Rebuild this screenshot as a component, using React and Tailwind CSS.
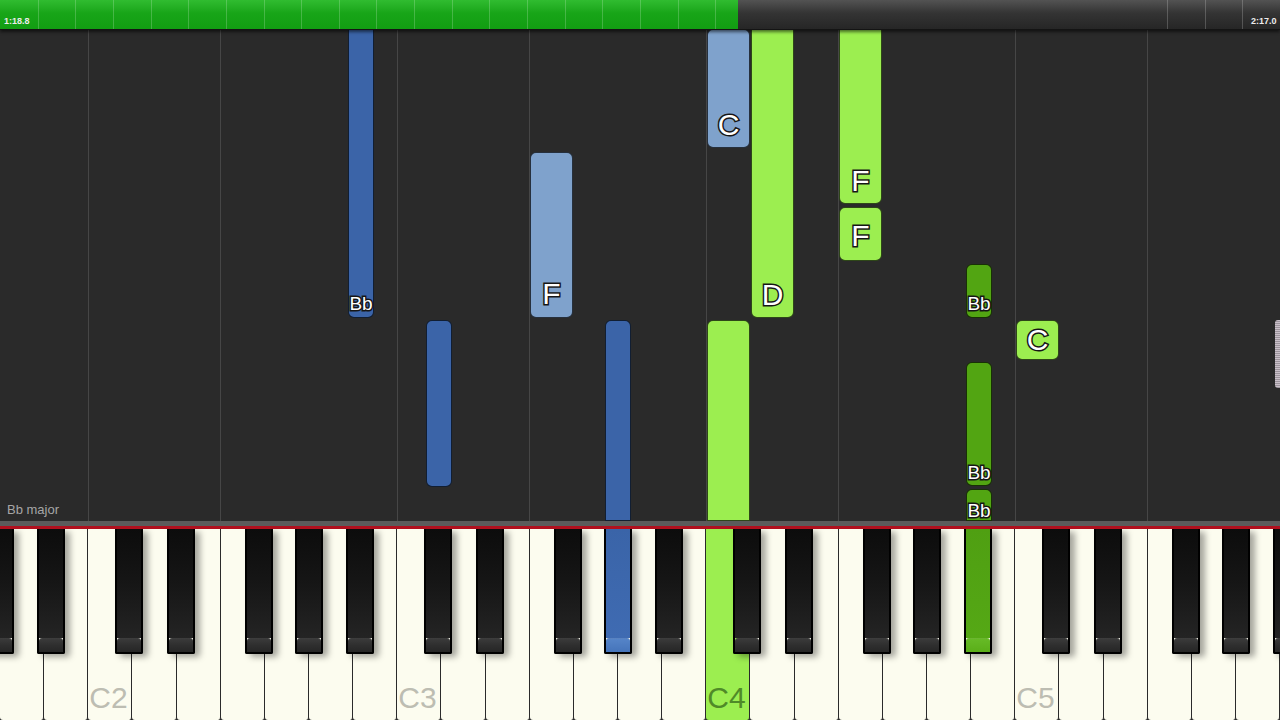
import React from 'react';

// key geometry (px)
const WHITE_W = 1280 / 29;
const BLACK_OFFSETS = [27, 79, 157, 207, 258]; // C#, D#, F#, G#, A# from the C of each octave
const WHITE_NAMES = ['C', 'D', 'E', 'F', 'G', 'A', 'B'];
const SEG_W = 1280 / 34;

// falling notes, positioned inside the roll area (top of roll = y 30)
const notes = [
  { cls: 'left-[348px] top-[-10px] w-[26px] h-[298px] bg-[#3b64a8] pb-[4px]', label: 'Bb' },
  { cls: 'left-[426px] top-[290px] w-[26px] h-[167px] bg-[#3b64a8]' },
  { cls: 'left-[530px] top-[122px] w-[43px] h-[166px] bg-[#7fa2cc] pb-[8px]', label: 'F', big: true },
  { cls: 'left-[605px] top-[290px] w-[26px] h-[201px] bg-[#3b64a8] rounded-b-none' },
  { cls: 'left-[707px] top-[-1px] w-[43px] h-[119px] bg-[#7fa2cc] pb-[7px]', label: 'C', big: true },
  { cls: 'left-[751px] top-[-10px] w-[43px] h-[298px] bg-[#9cee50] pb-[7px]', label: 'D', big: true },
  { cls: 'left-[707px] top-[290px] w-[43px] h-[201px] bg-[#9cee50] rounded-b-none' },
  { cls: 'left-[839px] top-[-10px] w-[43px] h-[184px] bg-[#9cee50] pb-[7px]', label: 'F', big: true },
  { cls: 'left-[839px] top-[177px] w-[43px] h-[54px] bg-[#9cee50] pb-[9px]', label: 'F', big: true },
  { cls: 'left-[966px] top-[234px] w-[26px] h-[54px] bg-[#52a512] pb-[4px]', label: 'Bb' },
  { cls: 'left-[966px] top-[332px] w-[26px] h-[124px] bg-[#52a512] pb-[3px]', label: 'Bb' },
  { cls: 'left-[966px] top-[459px] w-[26px] h-[32px] bg-[#52a512] rounded-b-none pb-0', label: 'Bb' },
  { cls: 'left-[1016px] top-[290px] w-[43px] h-[40px] bg-[#9cee50] pb-[4px]', label: 'C', big: true },
];

const gridLines = [
  'left-[88px]', 'left-[220px]', 'left-[397px]', 'left-[529px]',
  'left-[706px]', 'left-[838px]', 'left-[1015px]', 'left-[1147px]',
];

// bar dividers: every segment inside the played part, plus the last three
const dividers = [];
for (let i = 1; i < 34; i++) {
  const x = Math.round(i * SEG_W);
  if (x < 738 || i >= 31) dividers.push(x);
}

const outline = '[-webkit-text-stroke:3px_#161616] [paint-order:stroke_fill]';

const TopBar = () => (
  <div className="relative z-10 h-[30px] shrink-0 overflow-hidden border-b border-[#141414] bg-gradient-to-b from-[#535353] via-[#343434] via-45% to-[#262626] shadow-[0_2px_3px_rgba(0,0,0,0.55)]">
    <div className="absolute inset-y-0 left-0 w-[738px] bg-gradient-to-b from-[#30bc30] via-[#18a518] via-45% to-[#129d12]" />
    {dividers.map((x) => (
      <div key={x} className="absolute inset-y-0 w-px bg-white/20" style={{ left: x }} />
    ))}
    <span className="absolute left-[4px] bottom-[3px] text-[9px] font-bold leading-none text-[#ececec]">1:18.8</span>
    <span className="absolute left-[1251px] bottom-[3px] whitespace-nowrap text-[9px] font-bold leading-none text-[#ececec]">2:17.0</span>
  </div>
);

const Note = ({ note }) => (
  <div
    className={`absolute flex flex-col items-center justify-end overflow-visible rounded-[6px] border border-black/70 ${note.cls}`}
  >
    {note.label && (
      <span
        className={`whitespace-nowrap text-white ${outline} ${
          note.big ? 'text-[30px] leading-[30px]' : 'text-[19px] leading-[19px]'
        }`}
      >
        {note.label}
      </span>
    )}
  </div>
);

const Roll = () => (
  <div className="relative flex-1 overflow-hidden bg-[#2a2a2a]">
    {gridLines.map((l) => (
      <div key={l} className={`absolute inset-y-0 w-px bg-[#464646] ${l}`} />
    ))}
    {notes.map((n, i) => (
      <Note key={i} note={n} />
    ))}
    <span className="absolute left-[7px] bottom-[5px] text-[13px] leading-[13px] text-[#a6a6a6]">Bb major</span>
    <div className="absolute right-0 top-[290px] h-[68px] w-[5px] rounded-l-[3px] bg-[repeating-linear-gradient(180deg,#c9c0c9_0px,#c9c0c9_1px,#9c949c_1px,#9c949c_2px)]" />
  </div>
);

const BlackKey = ({ left, pressed }) => {
  let body = 'bg-gradient-to-b from-[#0c0c0c] via-[#161616] to-[#242424]';
  let lip = 'bg-gradient-to-b from-[#3a3a3a] via-[#2e2e2e] to-[#262626]';
  if (pressed === 'blue') {
    body = 'bg-gradient-to-b from-[#3a64a8] to-[#3f6bb2]';
    lip = 'bg-gradient-to-b from-[#5584c8] to-[#4574ba]';
  }
  if (pressed === 'green') {
    body = 'bg-gradient-to-b from-[#4f9f12] to-[#55a815]';
    lip = 'bg-gradient-to-b from-[#66ba26] to-[#5aae18]';
  }
  return (
    <div
      className="absolute top-0 flex h-[125px] w-[28px] flex-col rounded-b-[2px] border-2 border-t-0 border-black shadow-[5px_3px_6px_rgba(0,0,0,0.35)]"
      style={{ left }}
    >
      <div className={`flex-1 ${body}`} />
      <div className={`h-[14px] rounded-t-[3px] border-t border-white/10 ${lip}`} />
    </div>
  );
};

const Keyboard = () => {
  const whites = Array.from({ length: 29 }).map((_, i) => {
    const idx = i + 5; // first key is A1
    const name = WHITE_NAMES[idx % 7];
    const octave = Math.floor(idx / 7) + 1;
    return { name, octave, i };
  });

  const blacks = [];
  for (let oct = 1; oct <= 5; oct++) {
    const cx = (2 + (oct - 2) * 7) * WHITE_W;
    BLACK_OFFSETS.forEach((off, k) => {
      const left = cx + off;
      if (left > -28 && left < 1280) {
        let pressed = null;
        if (oct === 3 && k === 3) pressed = 'blue';
        if (oct === 4 && k === 4) pressed = 'green';
        blacks.push({ left, pressed, key: `${oct}-${k}` });
      }
    });
  }

  return (
    <div className="shrink-0">
      <div className="h-[5px] bg-[#5b5b5b]" />
      <div className="h-[3px] bg-[#b0101e]" />
      <div className="relative flex h-[191px] overflow-hidden">
        {whites.map((w) => {
          const isC4 = w.name === 'C' && w.octave === 4;
          return (
            <div
              key={w.i}
              className={`flex flex-1 flex-col justify-end rounded-b-[3px] border-r border-[#2a2a2a] pb-[7px] pl-[1px] ${
                isC4 ? 'bg-[#9cee50]' : 'bg-[#fcfcef]'
              }`}
            >
              {w.name === 'C' && (
                <span
                  className={`text-[30px] leading-[30px] ${isC4 ? 'text-[#4f8a28]' : 'text-[#bdbdb2]'}`}
                >
                  C{w.octave}
                </span>
              )}
            </div>
          );
        })}
        {blacks.map((b) => (
          <BlackKey key={b.key} left={b.left} pressed={b.pressed} />
        ))}
      </div>
    </div>
  );
};

export default function App() {
  return (
    <div className="flex h-[720px] w-[1280px] flex-col overflow-hidden bg-[#2a2a2a] font-['Liberation_Sans',Arial,sans-serif]">
      <TopBar />
      <Roll />
      <Keyboard />
    </div>
  );
}
